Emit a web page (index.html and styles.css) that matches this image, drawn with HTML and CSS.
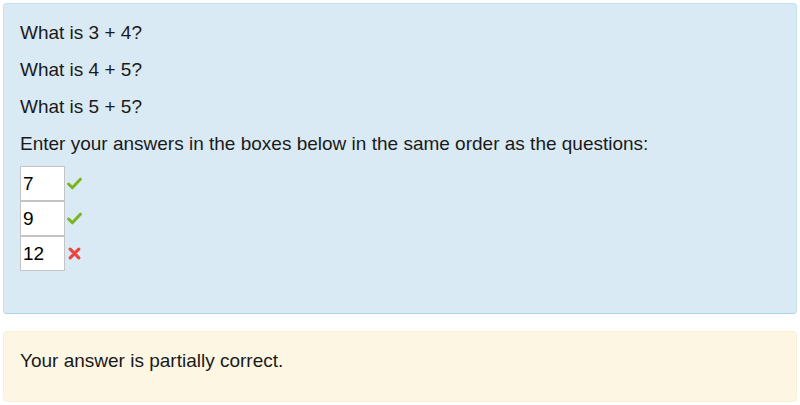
FILE: index.html
```html
<!DOCTYPE html>
<html lang="en">

<head>
    <meta charset="UTF-8">
    <meta name="viewport" content="width=device-width, initial-scale=1.0">
    <link rel="stylesheet" href="styles.css">
</head>

<body>

    <div class="formulation">
        <p>What is 3 + 4?</p>
        <p>What is 4 + 5?</p>
        <p>What is 5 + 5?</p>
        <p>Enter your answers in the boxes below in the same order as the questions:</p>
        <div class="answers">
            <div class="answer-row">
                <input type="text" class="answer-input" value="7">
                <svg class="icon" viewBox="0 0 14 12"><path d="M1.5 6.5 L5 10 L12.5 2" fill="none" stroke="#7ab51d" stroke-width="2.8" stroke-linecap="round" stroke-linejoin="round"/></svg>
            </div>
            <div class="answer-row">
                <input type="text" class="answer-input" value="9">
                <svg class="icon" viewBox="0 0 14 12"><path d="M1.5 6.5 L5 10 L12.5 2" fill="none" stroke="#7ab51d" stroke-width="2.8" stroke-linecap="round" stroke-linejoin="round"/></svg>
            </div>
            <div class="answer-row">
                <input type="text" class="answer-input" value="12">
                <svg class="icon" viewBox="0 0 14 12"><path d="M3 2 L11 10 M11 2 L3 10" fill="none" stroke="#f0443f" stroke-width="3" stroke-linecap="round"/></svg>
            </div>
        </div>
    </div>

    <div class="outcome">
        <p>Your answer is partially correct.</p>
    </div>

</body>

</html>
```

FILE: styles.css
```css
body {
    margin: 0;
    padding: 3px 3px 0 3px;
    font-family: "Liberation Sans", Arial, sans-serif;
    font-size: 19px;
    line-height: 22px;
    color: #1a1a1a;
    background-color: #fff;
}

p {
    margin: 0 0 15px 0;
}

.formulation {
    background-color: #d9eaf5;
    border: 1px solid #c3e0ef;
    border-bottom-color: #a9d3ea;
    border-radius: 4px;
    padding: 18px 16px 43px 16px;
    height: 248px;
}

.answers {
    display: flex;
    flex-direction: column;
    margin-top: -4px;
}

.answer-row {
    display: flex;
    align-items: center;
    height: 35px;
}

.answer-input {
    box-sizing: border-box;
    width: 45px;
    height: 35px;
    margin: 0;
    padding: 2px 2px;
    border: 1px solid #c4c4c4;
    background-color: #fff;
    font-family: "Liberation Sans", Arial, sans-serif;
    font-size: 19px;
    color: #000;
}

.icon {
    width: 15px;
    height: 13px;
    margin-left: 2px;
}

.outcome {
    margin-top: 17px;
    background-color: #fcf6e3;
    border: 1px solid #f7efd6;
    border-radius: 4px;
    padding: 18px 16px 0 16px;
    height: 51px;
}
```
